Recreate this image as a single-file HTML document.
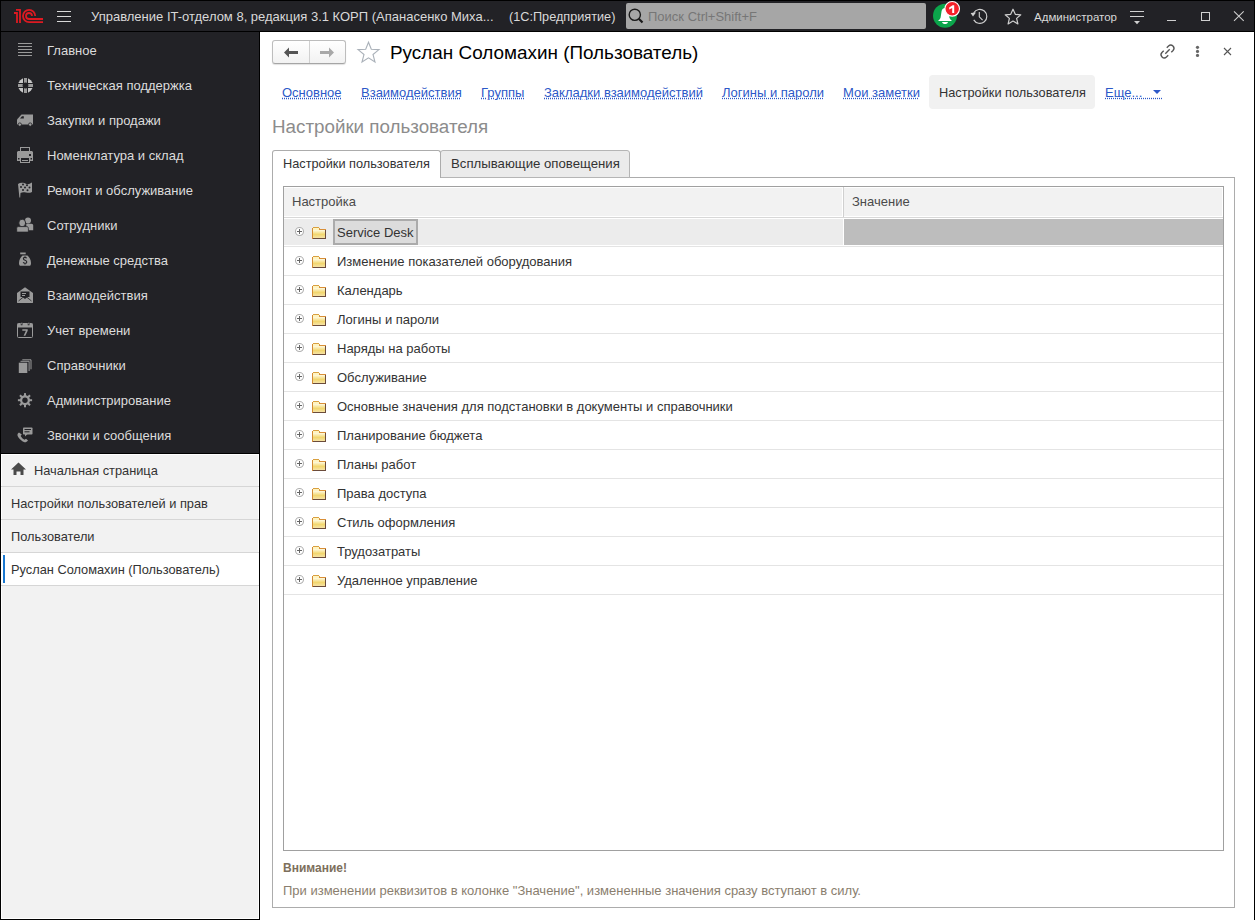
<!DOCTYPE html>
<html><head><meta charset="utf-8">
<style>
*{margin:0;padding:0;box-sizing:border-box}
html,body{width:1255px;height:920px;overflow:hidden;background:#fff;font-family:"Liberation Sans",sans-serif;font-size:13px}
.a{position:absolute}
.t{position:absolute;white-space:nowrap;line-height:16px}
svg{position:absolute;overflow:visible}
.lk{text-decoration:underline dotted;text-underline-offset:1px}
</style></head><body>
<!-- frame -->
<div class="a" style="left:0;top:0;width:1255px;height:32px;background:#000"></div>
<div class="a" style="left:1px;top:1px;width:1253px;height:30px;background:#222226"></div>
<div class="a" style="left:0;top:0;width:1px;height:920px;background:#000"></div>
<div class="a" style="left:1254px;top:0;width:1px;height:920px;background:#000"></div>
<div class="a" style="left:0;top:919px;width:260px;height:1px;background:#000"></div>
<div class="a" style="left:259px;top:32px;width:1px;height:888px;background:#000"></div>
<!-- sidebar dark -->
<div class="a" style="left:1px;top:32px;width:258px;height:421px;background:#222226"></div>
<div class="a" style="left:1px;top:453px;width:258px;height:1px;background:#000"></div>
<div class="a" style="left:1px;top:454px;width:258px;height:465px;background:#f2f2f2;border:1px solid #fff"></div>

<!-- title bar content -->
<svg style="left:0;top:0" width="50" height="32" viewBox="0 0 50 32">
  <g fill="none" stroke="#dd1a22" stroke-width="1.8">
    <path d="M14 13 H17 V23.1 M16 9.9 H20 V23.1"/>
    <path d="M35.2 16 A6.1 6.1 0 1 0 29.1 22.1 H43"/>
    <path d="M32 16 A3 3 0 1 0 29 19 H43"/>
  </g>
</svg>
<div class="a" style="left:57px;top:11px;width:14px;height:1px;background:#d8d8d8"></div>
<div class="a" style="left:57px;top:16px;width:14px;height:1px;background:#d8d8d8"></div>
<div class="a" style="left:57px;top:21px;width:14px;height:1px;background:#d8d8d8"></div>
<div class="t" style="left:91px;top:9px;color:#d9d9d9">Управление IT-отделом 8, редакция 3.1 КОРП (Апанасенко Миха...</div>
<div class="t" style="left:509px;top:9px;color:#d9d9d9;font-size:12.7px">(1С:Предприятие)</div>
<div class="a" style="left:626px;top:3px;width:300px;height:26px;background:#a6a6a6;border-radius:2px"></div>
<svg style="left:628px;top:8px" width="16" height="16" viewBox="0 0 16 16">
  <circle cx="6.8" cy="6.8" r="5.6" fill="none" stroke="#1a1a1a" stroke-width="1.4"/>
  <path d="M10.8 10.8 L14.5 14.5" stroke="#1a1a1a" stroke-width="2.2"/>
</svg>
<div class="t" style="left:648px;top:9px;color:#767676">Поиск Ctrl+Shift+F</div>

<svg style="left:930px;top:0" width="32" height="32" viewBox="0 0 32 32">
  <circle cx="15" cy="15.8" r="12" fill="#0ba54b"/>
  <path d="M8 20.9 C9 20 10.2 19 10.6 17.5 L11.6 11 C12 9 13.5 8 15 8 C16.5 8 18 9 18.4 11 L19.4 17.5 C19.8 19 21 20 22 20.9Z" fill="#fff"/>
  <path d="M12 22.1 H18 C17.5 23.5 16.5 24.1 15 24.1 C13.5 24.1 12.5 23.5 12 22.1Z" fill="#fff"/>
  <circle cx="22.2" cy="8.85" r="7.3" fill="#f5212a" stroke="#fff" stroke-width="1.1"/>
  <path d="M19.2 7.6 L22.6 5.2 H24.2 V13 H22.2 V8 L19.2 9.6Z" fill="#fff"/>
</svg>
<svg style="left:965px;top:4px" width="24" height="24" viewBox="0 0 24 24">
  <path d="M8.74 8.9 A7 7 0 1 1 8.74 15.9" fill="none" stroke="#d0d0d0" stroke-width="1.15"/>
  <path d="M5.6 9 L11 8.6 L8 12.6Z" fill="#d0d0d0"/>
  <path d="M14.3 8 V12.8 L17.6 16.2" fill="none" stroke="#d0d0d0" stroke-width="1.1"/>
</svg>
<svg style="left:1004px;top:7.6px" width="18" height="18" viewBox="0 0 18 18">
  <path d="M9 1.2 L11.3 6.3 L16.8 6.8 L12.6 10.4 L13.9 15.9 L9 13 L4.1 15.9 L5.4 10.4 L1.2 6.8 L6.7 6.3Z" fill="none" stroke="#cfcfcf" stroke-width="1.2" stroke-linejoin="round"/>
</svg>
<div class="t" style="left:1034px;top:9px;color:#d9d9d9;font-size:11.5px">Администратор</div>
<div class="a" style="left:1130px;top:11px;width:14px;height:1px;background:#d0d0d0"></div>
<div class="a" style="left:1130px;top:16px;width:14px;height:1px;background:#d0d0d0"></div>
<svg style="left:1134px;top:21px" width="6" height="4" viewBox="0 0 6 4"><path d="M0 0 H6 L3 3.3Z" fill="#d0d0d0"/></svg>
<div class="a" style="left:1167px;top:20px;width:9px;height:1px;background:#cfcfcf"></div>
<div class="a" style="left:1201px;top:12px;width:9px;height:9px;border:1px solid #d0d0d0"></div>
<svg style="left:1233px;top:11px" width="12" height="11" viewBox="0 0 12 11"><path d="M1 0.3 L10.7 9.8 M10.7 0.3 L1 9.8" stroke="#d0d0d0" stroke-width="1.05"/></svg>

<!-- sidebar items -->
<svg style="left:17px;top:42px" width="17" height="17" viewBox="0 0 17 17"><g fill="#9a9a9a"><rect x="1" y="1" width="14" height="1"/><rect x="1" y="4" width="14" height="1"/><rect x="1" y="7" width="14" height="1"/><rect x="1" y="10" width="14" height="1"/><rect x="1" y="13" width="14" height="1"/></g></svg>
<div class="t" style="left:47px;top:43px;color:#dcdcdc">Главное</div>
<svg style="left:17px;top:77px" width="17" height="17" viewBox="0 0 17 17"><circle cx="8.5" cy="8.5" r="7.5" fill="#c8c8c8"/><g fill="#9a9a9a"><rect x="7" y="1" width="3" height="5"/><rect x="7" y="11" width="3" height="5"/><rect x="1" y="7" width="5" height="3"/><rect x="11" y="7" width="5" height="3"/></g><g fill="#222226"><rect x="6" y="0" width="1" height="17"/><rect x="10" y="0" width="1" height="17"/><rect x="0" y="6" width="17" height="1"/><rect x="0" y="10" width="17" height="1"/><circle cx="8.5" cy="8.5" r="2.9"/></g></svg>
<div class="t" style="left:47px;top:78px;color:#dcdcdc">Техническая поддержка</div>
<svg style="left:17px;top:112px" width="17" height="17" viewBox="0 0 17 17"><path d="M0 7.5 L4.5 2.5 H16 V12.5 H0Z" fill="#9a9a9a"/><path d="M3 6.5 L5 4.3 H6.8 V6.5Z" fill="#222226"/><circle cx="2.8" cy="12.6" r="1.7" fill="#9a9a9a" stroke="#222226" stroke-width="0.8"/><circle cx="13.2" cy="12.6" r="1.7" fill="#9a9a9a" stroke="#222226" stroke-width="0.8"/></svg>
<div class="t" style="left:47px;top:113px;color:#dcdcdc">Закупки и продажи</div>
<svg style="left:17px;top:147px" width="17" height="17" viewBox="0 0 17 17"><rect x="3.5" y="0.5" width="9" height="5" fill="none" stroke="#9a9a9a"/><path d="M1 4 H15 L16 5 V14 H0 V5Z" fill="#9a9a9a"/><rect x="3.5" y="10.5" width="9" height="5" fill="#222226" stroke="#9a9a9a"/><rect x="5" y="13" width="6" height="1" fill="#9a9a9a"/><rect x="12" y="7" width="2" height="2" fill="#222226"/><rect x="1" y="11" width="1.5" height="1.5" fill="#222226"/><rect x="13.5" y="11" width="1.5" height="1.5" fill="#222226"/></svg>
<div class="t" style="left:47px;top:148px;color:#dcdcdc">Номенклатура и склад</div>
<svg style="left:17px;top:182px" width="17" height="17" viewBox="0 0 17 17"><path d="M1 2 C4 0 7 1 9.5 2 C11.5 2.7 13 1.5 15 0.5 V10 C13 11 11 11 9 10.5 C7 10 5 10 3.5 11 L3.2 15.5 L2.4 15.5 Z" fill="#9a9a9a"/><g fill="#222226"><circle cx="6" cy="2.5" r="1"/><circle cx="10" cy="3.3" r="1"/><circle cx="4" cy="5" r="1"/><circle cx="8" cy="5.6" r="1"/><circle cx="12.5" cy="5.5" r="1"/><circle cx="6" cy="8" r="1"/><circle cx="10.5" cy="8.3" r="1"/></g></svg>
<div class="t" style="left:47px;top:183px;color:#dcdcdc">Ремонт и обслуживание</div>
<svg style="left:17px;top:217px" width="17" height="17" viewBox="0 0 17 17"><circle cx="11" cy="3.4" r="3" fill="#9a9a9a"/><path d="M9.3 6.7 H14.5 C15.5 6.7 16.2 7.5 16.2 8.5 V13.2 H9.3Z" fill="#9a9a9a"/><ellipse cx="5.2" cy="6" rx="3.4" ry="3.8" fill="#9a9a9a" stroke="#222226" stroke-width="0.9"/><path d="M1.3 9.6 H9.8 C10.8 9.6 11.4 10.4 11.4 11.4 V15.1 H-0.3 V11.4 C-0.3 10.4 0.3 9.6 1.3 9.6Z" fill="#9a9a9a" stroke="#222226" stroke-width="0.8"/></svg>
<div class="t" style="left:47px;top:218px;color:#dcdcdc">Сотрудники</div>
<svg style="left:17px;top:252px" width="17" height="17" viewBox="0 0 17 17"><rect x="3.2" y="0.5" width="5.5" height="1.8" fill="#9a9a9a"/><path d="M3.5 3.5 H8.5 C10.5 5 12 8 12 11 C12 13 11.5 13.8 10 13.8 H2 C0.5 13.8 0 13 0 11 C0 8 1.5 5 3.5 3.5Z" fill="#9a9a9a" transform="translate(2,0)"/><path d="M9.6 6.3 C9.2 5.6 8.6 5.4 8 5.4 C7 5.4 6.4 5.9 6.4 6.7 C6.4 8.6 9.8 7.8 9.8 9.9 C9.8 10.8 9.1 11.3 8 11.3 C7.2 11.3 6.6 11 6.2 10.3 M8 4.3 V5.4 M8 11.3 V12.4" fill="none" stroke="#222226" stroke-width="1.1"/></svg>
<div class="t" style="left:47px;top:253px;color:#dcdcdc">Денежные средства</div>
<svg style="left:17px;top:287px" width="17" height="17" viewBox="0 0 17 17"><path d="M0 6 L8 0.3 L16 6 V15.5 C16 15.8 15.8 16 15.5 16 H0.5 C0.2 16 0 15.8 0 15.5Z" fill="#9a9a9a"/><rect x="3.5" y="4.5" width="9" height="5.5" fill="#222226"/><rect x="5" y="6" width="4" height="1" fill="#9a9a9a"/><rect x="5" y="8" width="3" height="1" fill="#9a9a9a"/><path d="M1.5 14 L7 9.5 M14.5 14 L9 9.5" stroke="#222226" stroke-width="0.8"/><path d="M5.5 10 L8 12 L10.5 10Z" fill="#222226"/></svg>
<div class="t" style="left:47px;top:288px;color:#dcdcdc">Взаимодействия</div>
<svg style="left:17px;top:322px" width="17" height="17" viewBox="0 0 17 17"><rect x="0.5" y="1.5" width="15" height="14" rx="1" fill="none" stroke="#9a9a9a"/><rect x="0.5" y="1.5" width="15" height="4" fill="#9a9a9a"/><rect x="4" y="0" width="1.2" height="3" fill="#9a9a9a" stroke="#222226" stroke-width="0.5"/><rect x="11" y="0" width="1.2" height="3" fill="#9a9a9a" stroke="#222226" stroke-width="0.5"/><path d="M5.3 7.3 H10.7 V8.7 L8.3 13.8 H6.6 L8.9 8.8 H5.3Z" fill="#9a9a9a"/></svg>
<div class="t" style="left:47px;top:323px;color:#dcdcdc">Учет времени</div>
<svg style="left:17px;top:358px" width="17" height="17" viewBox="0 0 17 17"><path d="M5.3 1.8 H14 V11.3" fill="none" stroke="#9a9a9a" stroke-width="1"/><path d="M3.5 3.3 H12.1 V13" fill="none" stroke="#9a9a9a" stroke-width="1"/><rect x="1.8" y="4.7" width="8.5" height="10.3" fill="#9a9a9a"/></svg>
<div class="t" style="left:47px;top:358px;color:#dcdcdc">Справочники</div>
<svg style="left:18px;top:393px" width="17" height="17" viewBox="0 0 17 17"><g transform="translate(7,7.2)" fill="#9a9a9a"><circle r="5"/><rect x="-1" y="-7.1" width="2" height="14.2"/><rect x="-7.1" y="-1" width="14.2" height="2"/><rect x="-1" y="-7.1" width="2" height="14.2" transform="rotate(45)"/><rect x="-1" y="-7.1" width="2" height="14.2" transform="rotate(-45)"/><circle r="2.7" fill="#222226"/></g></svg>
<div class="t" style="left:47px;top:393px;color:#dcdcdc">Администрирование</div>
<svg style="left:17px;top:427px" width="17" height="17" viewBox="0 0 17 17"><rect x="6" y="0.5" width="9.5" height="7" rx="0.8" fill="#9a9a9a"/><path d="M8 7 L8 9.5 L10.5 7Z" fill="#9a9a9a"/><rect x="7.5" y="2" width="6.5" height="1" fill="#222226"/><rect x="7.5" y="4.3" width="5" height="1" fill="#222226"/><path d="M2 5.5 C0 6.5 0 8.5 1.5 10.5 C3 12.5 5 14.5 7.5 15.3 C9 15.5 10 14.5 11 13.5 L9 11.8 L7.5 12.8 C6 12 4.5 10.5 3.6 9 L4.8 7.5Z" fill="#9a9a9a"/></svg>
<div class="t" style="left:47px;top:428px;color:#dcdcdc">Звонки и сообщения</div>
<div class="a" style="left:1px;top:486px;width:258px;height:1px;background:#d6d6d6"></div>
<div class="a" style="left:1px;top:519px;width:258px;height:1px;background:#d6d6d6"></div>
<div class="a" style="left:1px;top:552px;width:258px;height:1px;background:#d6d6d6"></div>
<div class="a" style="left:1px;top:585px;width:258px;height:1px;background:#d6d6d6"></div>
<div class="a" style="left:2px;top:553px;width:256px;height:32px;background:#fff"></div>
<div class="a" style="left:3px;top:555px;width:2px;height:28px;background:#1a78d0"></div>
<svg style="left:11px;top:462px" width="16" height="14" viewBox="0 0 16 14"><path d="M7.5 0.5 L15 7.5 H12.5 V13 H9.5 V9.5 H5.5 V13 H2.5 V7.5 H0Z" fill="#4a4a4a"/></svg>
<div class="t" style="left:34px;top:463px;color:#333;font-size:12.8px">Начальная страница</div>
<div class="t" style="left:11px;top:496px;color:#333;font-size:12.8px">Настройки пользователей и прав</div>
<div class="t" style="left:11px;top:529px;color:#333;font-size:12.8px">Пользователи</div>
<div class="t" style="left:11px;top:562px;color:#333;font-size:12.8px">Руслан Соломахин (Пользователь)</div>
<!-- content -->
<svg width="0" height="0" style="position:absolute"><defs><linearGradient id="fg" x1="0" y1="0" x2="0" y2="1"><stop offset="0" stop-color="#fffae0"/><stop offset="0.55" stop-color="#f2d66e"/><stop offset="1" stop-color="#f6e3a6"/></linearGradient><linearGradient id="fs" x1="0" y1="0" x2="0" y2="1"><stop offset="0" stop-color="#d99a3a"/><stop offset="1" stop-color="#7a5530"/></linearGradient></defs></svg>
<div class="a" style="left:272px;top:40px;width:74px;height:24px;border:1px solid #bdbdbd;border-bottom-color:#a5a5a5;border-radius:3px;background:linear-gradient(#fff,#f2f2f2);box-shadow:0 1px 1px rgba(0,0,0,0.12)"></div>
<div class="a" style="left:309px;top:41px;width:1px;height:22px;background:#d0d0d0"></div>
<svg style="left:284px;top:47px" width="15" height="11" viewBox="0 0 15 11"><path d="M0 5.5 L5 0.5 V4 H14 V7 H5 V10.5Z" fill="#555"/></svg>
<svg style="left:320px;top:47px" width="15" height="11" viewBox="0 0 15 11"><path d="M14 5.5 L9 0.5 V4 H0 V7 H9 V10.5Z" fill="#a8a8a8"/></svg>
<svg style="left:356px;top:40px" width="25" height="24" viewBox="0 0 25 24"><path d="M12.5 2.3 L15.3 9.2 L23 9.6 L17 14.5 L19 22 L12.5 17.8 L6 22 L8 14.5 L2 9.6 L9.7 9.2Z" fill="none" stroke="#aab1b9" stroke-width="1.1" stroke-linejoin="miter"/></svg>
<div class="t" style="left:390px;top:42px;font-size:18.9px;line-height:22px;color:#000">Руслан Соломахин (Пользователь)</div>
<svg style="left:1160px;top:44px" width="15" height="15" viewBox="0 0 15 15"><g fill="none" stroke="#555" stroke-width="1.35"><path d="M6.77 3.71 L8.54 1.94 A3.2 3.2 0 0 1 13.06 6.46 L11.29 8.23"/><path d="M3.71 6.77 L1.94 8.54 A3.2 3.2 0 0 0 6.46 13.06 L8.23 11.29"/><path d="M5.3 9.7 L9.7 5.3"/></g></svg>
<svg style="left:1195px;top:45px" width="5" height="13" viewBox="0 0 5 13"><g fill="#666"><circle cx="2.5" cy="2.3" r="1.6"/><circle cx="2.5" cy="6.4" r="1.6"/><circle cx="2.5" cy="10.4" r="1.6"/></g></svg>
<svg style="left:1223px;top:47px" width="9" height="9" viewBox="0 0 9 9"><path d="M1 1 L8 8 M8 1 L1 8" stroke="#555" stroke-width="1.1"/></svg>
<div class="a" style="left:929px;top:75px;width:166px;height:34px;background:#f1f1f1;border-radius:4px"></div>
<div class="t lk" style="left:282px;top:85px;color:#2c58c8">Основное</div>
<div class="t lk" style="left:361px;top:85px;color:#2c58c8">Взаимодействия</div>
<div class="t lk" style="left:481px;top:85px;color:#2c58c8">Группы</div>
<div class="t lk" style="left:544px;top:85px;color:#2c58c8">Закладки взаимодействий</div>
<div class="t lk" style="left:722px;top:85px;color:#2c58c8">Логины и пароли</div>
<div class="t lk" style="left:843px;top:85px;color:#2c58c8">Мои заметки</div>
<div class="t" style="left:939px;top:85px;color:#333;font-size:12.75px">Настройки пользователя</div>
<div class="t lk" style="left:1105px;top:85px;color:#2c58c8;width:59px">Еще...&nbsp;&nbsp;&nbsp;&nbsp;&nbsp;&nbsp;</div>
<svg style="left:1153px;top:90px" width="8" height="4" viewBox="0 0 8 4"><path d="M0 0 H8 L4 4Z" fill="#2c58c8"/></svg>
<div class="t" style="left:272px;top:116px;font-size:18.8px;line-height:22px;color:#8c8c8c">Настройки пользователя</div>
<div class="a" style="left:272px;top:177px;width:963px;height:731px;border:1px solid #acacac;border-top:0"></div>
<div class="a" style="left:629px;top:177px;width:606px;height:1px;background:#acacac"></div>
<div class="a" style="left:440px;top:150px;width:190px;height:28px;border:1px solid #b5b5b5;border-radius:3px 3px 0 0;background:#ebebeb"></div>
<div class="a" style="left:272px;top:150px;width:169px;height:28px;border:1px solid #acacac;border-bottom:0;border-radius:3px 3px 0 0;background:#fff"></div>
<div class="t" style="left:283px;top:156px;color:#333;font-size:12.75px">Настройки пользователя</div>
<div class="t" style="left:451px;top:156px;color:#333;font-size:13.2px">Всплывающие оповещения</div>
<div class="a" style="left:283px;top:186px;width:941px;height:665px;border:1px solid #a0a0a0;background:#fff"></div>
<div class="a" style="left:284px;top:187px;width:939px;height:30px;background:#f2f2f2;border:1px solid #fff;border-left:0"></div>
<div class="a" style="left:284px;top:217px;width:939px;height:1px;background:#d8d8d8"></div>
<div class="a" style="left:843px;top:187px;width:1px;height:30px;background:#d0d0d0"></div>
<div class="a" style="left:842px;top:187px;width:1px;height:30px;background:#fff"></div>
<div class="t" style="left:292px;top:194px;color:#4a4a4a">Настройка</div>
<div class="t" style="left:852px;top:194px;color:#4a4a4a">Значение</div>
<div class="a" style="left:284px;top:219px;width:559px;height:26px;background:#ececec"></div>
<div class="a" style="left:844px;top:219px;width:379px;height:26px;background:#bdbdbd"></div>
<div class="a" style="left:333px;top:219px;width:85px;height:26px;background:#dcdcdc;border:2px solid #ababab"></div>
<div class="a" style="left:284px;top:246px;width:939px;height:1px;background:#e4e4e4"></div>
<svg style="left:294px;top:226px" width="12" height="12" viewBox="0 0 12 12"><circle cx="5.5" cy="5.5" r="4" fill="#fff" stroke="#b0b0b0" stroke-width="1.1"/><path d="M5.5 3 V8 M3 5.5 H8" stroke="#666" stroke-width="1"/></svg>
<svg style="left:312px;top:227px" width="14" height="12" viewBox="0 0 14 12" shape-rendering="crispEdges"><rect x="1" y="1" width="6" height="2" fill="#fff4c0"/><rect x="1" y="3" width="12" height="8" fill="url(#fg)"/><rect x="0" y="1" width="1" height="11" fill="#d38b32"/><rect x="1" y="0" width="6" height="1" fill="#d9a040"/><rect x="7" y="1" width="1" height="1" fill="#d9a040"/><rect x="7" y="2" width="7" height="1" fill="#d98f38"/><rect x="13" y="3" width="1" height="9" fill="#6b4b3b"/><rect x="1" y="11" width="13" height="1" fill="#6b4b3b"/></svg>
<div class="t" style="left:337px;top:225px;color:#333">Service Desk</div>
<div class="a" style="left:284px;top:275px;width:939px;height:1px;background:#e4e4e4"></div>
<svg style="left:294px;top:255px" width="12" height="12" viewBox="0 0 12 12"><circle cx="5.5" cy="5.5" r="4" fill="#fff" stroke="#b0b0b0" stroke-width="1.1"/><path d="M5.5 3 V8 M3 5.5 H8" stroke="#666" stroke-width="1"/></svg>
<svg style="left:312px;top:256px" width="14" height="12" viewBox="0 0 14 12" shape-rendering="crispEdges"><rect x="1" y="1" width="6" height="2" fill="#fff4c0"/><rect x="1" y="3" width="12" height="8" fill="url(#fg)"/><rect x="0" y="1" width="1" height="11" fill="#d38b32"/><rect x="1" y="0" width="6" height="1" fill="#d9a040"/><rect x="7" y="1" width="1" height="1" fill="#d9a040"/><rect x="7" y="2" width="7" height="1" fill="#d98f38"/><rect x="13" y="3" width="1" height="9" fill="#6b4b3b"/><rect x="1" y="11" width="13" height="1" fill="#6b4b3b"/></svg>
<div class="t" style="left:337px;top:254px;color:#333">Изменение показателей оборудования</div>
<div class="a" style="left:284px;top:304px;width:939px;height:1px;background:#e4e4e4"></div>
<svg style="left:294px;top:284px" width="12" height="12" viewBox="0 0 12 12"><circle cx="5.5" cy="5.5" r="4" fill="#fff" stroke="#b0b0b0" stroke-width="1.1"/><path d="M5.5 3 V8 M3 5.5 H8" stroke="#666" stroke-width="1"/></svg>
<svg style="left:312px;top:285px" width="14" height="12" viewBox="0 0 14 12" shape-rendering="crispEdges"><rect x="1" y="1" width="6" height="2" fill="#fff4c0"/><rect x="1" y="3" width="12" height="8" fill="url(#fg)"/><rect x="0" y="1" width="1" height="11" fill="#d38b32"/><rect x="1" y="0" width="6" height="1" fill="#d9a040"/><rect x="7" y="1" width="1" height="1" fill="#d9a040"/><rect x="7" y="2" width="7" height="1" fill="#d98f38"/><rect x="13" y="3" width="1" height="9" fill="#6b4b3b"/><rect x="1" y="11" width="13" height="1" fill="#6b4b3b"/></svg>
<div class="t" style="left:337px;top:283px;color:#333">Календарь</div>
<div class="a" style="left:284px;top:333px;width:939px;height:1px;background:#e4e4e4"></div>
<svg style="left:294px;top:313px" width="12" height="12" viewBox="0 0 12 12"><circle cx="5.5" cy="5.5" r="4" fill="#fff" stroke="#b0b0b0" stroke-width="1.1"/><path d="M5.5 3 V8 M3 5.5 H8" stroke="#666" stroke-width="1"/></svg>
<svg style="left:312px;top:314px" width="14" height="12" viewBox="0 0 14 12" shape-rendering="crispEdges"><rect x="1" y="1" width="6" height="2" fill="#fff4c0"/><rect x="1" y="3" width="12" height="8" fill="url(#fg)"/><rect x="0" y="1" width="1" height="11" fill="#d38b32"/><rect x="1" y="0" width="6" height="1" fill="#d9a040"/><rect x="7" y="1" width="1" height="1" fill="#d9a040"/><rect x="7" y="2" width="7" height="1" fill="#d98f38"/><rect x="13" y="3" width="1" height="9" fill="#6b4b3b"/><rect x="1" y="11" width="13" height="1" fill="#6b4b3b"/></svg>
<div class="t" style="left:337px;top:312px;color:#333">Логины и пароли</div>
<div class="a" style="left:284px;top:362px;width:939px;height:1px;background:#e4e4e4"></div>
<svg style="left:294px;top:342px" width="12" height="12" viewBox="0 0 12 12"><circle cx="5.5" cy="5.5" r="4" fill="#fff" stroke="#b0b0b0" stroke-width="1.1"/><path d="M5.5 3 V8 M3 5.5 H8" stroke="#666" stroke-width="1"/></svg>
<svg style="left:312px;top:343px" width="14" height="12" viewBox="0 0 14 12" shape-rendering="crispEdges"><rect x="1" y="1" width="6" height="2" fill="#fff4c0"/><rect x="1" y="3" width="12" height="8" fill="url(#fg)"/><rect x="0" y="1" width="1" height="11" fill="#d38b32"/><rect x="1" y="0" width="6" height="1" fill="#d9a040"/><rect x="7" y="1" width="1" height="1" fill="#d9a040"/><rect x="7" y="2" width="7" height="1" fill="#d98f38"/><rect x="13" y="3" width="1" height="9" fill="#6b4b3b"/><rect x="1" y="11" width="13" height="1" fill="#6b4b3b"/></svg>
<div class="t" style="left:337px;top:341px;color:#333">Наряды на работы</div>
<div class="a" style="left:284px;top:391px;width:939px;height:1px;background:#e4e4e4"></div>
<svg style="left:294px;top:371px" width="12" height="12" viewBox="0 0 12 12"><circle cx="5.5" cy="5.5" r="4" fill="#fff" stroke="#b0b0b0" stroke-width="1.1"/><path d="M5.5 3 V8 M3 5.5 H8" stroke="#666" stroke-width="1"/></svg>
<svg style="left:312px;top:372px" width="14" height="12" viewBox="0 0 14 12" shape-rendering="crispEdges"><rect x="1" y="1" width="6" height="2" fill="#fff4c0"/><rect x="1" y="3" width="12" height="8" fill="url(#fg)"/><rect x="0" y="1" width="1" height="11" fill="#d38b32"/><rect x="1" y="0" width="6" height="1" fill="#d9a040"/><rect x="7" y="1" width="1" height="1" fill="#d9a040"/><rect x="7" y="2" width="7" height="1" fill="#d98f38"/><rect x="13" y="3" width="1" height="9" fill="#6b4b3b"/><rect x="1" y="11" width="13" height="1" fill="#6b4b3b"/></svg>
<div class="t" style="left:337px;top:370px;color:#333">Обслуживание</div>
<div class="a" style="left:284px;top:420px;width:939px;height:1px;background:#e4e4e4"></div>
<svg style="left:294px;top:400px" width="12" height="12" viewBox="0 0 12 12"><circle cx="5.5" cy="5.5" r="4" fill="#fff" stroke="#b0b0b0" stroke-width="1.1"/><path d="M5.5 3 V8 M3 5.5 H8" stroke="#666" stroke-width="1"/></svg>
<svg style="left:312px;top:401px" width="14" height="12" viewBox="0 0 14 12" shape-rendering="crispEdges"><rect x="1" y="1" width="6" height="2" fill="#fff4c0"/><rect x="1" y="3" width="12" height="8" fill="url(#fg)"/><rect x="0" y="1" width="1" height="11" fill="#d38b32"/><rect x="1" y="0" width="6" height="1" fill="#d9a040"/><rect x="7" y="1" width="1" height="1" fill="#d9a040"/><rect x="7" y="2" width="7" height="1" fill="#d98f38"/><rect x="13" y="3" width="1" height="9" fill="#6b4b3b"/><rect x="1" y="11" width="13" height="1" fill="#6b4b3b"/></svg>
<div class="t" style="left:337px;top:399px;color:#333">Основные значения для подстановки в документы и справочники</div>
<div class="a" style="left:284px;top:449px;width:939px;height:1px;background:#e4e4e4"></div>
<svg style="left:294px;top:429px" width="12" height="12" viewBox="0 0 12 12"><circle cx="5.5" cy="5.5" r="4" fill="#fff" stroke="#b0b0b0" stroke-width="1.1"/><path d="M5.5 3 V8 M3 5.5 H8" stroke="#666" stroke-width="1"/></svg>
<svg style="left:312px;top:430px" width="14" height="12" viewBox="0 0 14 12" shape-rendering="crispEdges"><rect x="1" y="1" width="6" height="2" fill="#fff4c0"/><rect x="1" y="3" width="12" height="8" fill="url(#fg)"/><rect x="0" y="1" width="1" height="11" fill="#d38b32"/><rect x="1" y="0" width="6" height="1" fill="#d9a040"/><rect x="7" y="1" width="1" height="1" fill="#d9a040"/><rect x="7" y="2" width="7" height="1" fill="#d98f38"/><rect x="13" y="3" width="1" height="9" fill="#6b4b3b"/><rect x="1" y="11" width="13" height="1" fill="#6b4b3b"/></svg>
<div class="t" style="left:337px;top:428px;color:#333">Планирование бюджета</div>
<div class="a" style="left:284px;top:478px;width:939px;height:1px;background:#e4e4e4"></div>
<svg style="left:294px;top:458px" width="12" height="12" viewBox="0 0 12 12"><circle cx="5.5" cy="5.5" r="4" fill="#fff" stroke="#b0b0b0" stroke-width="1.1"/><path d="M5.5 3 V8 M3 5.5 H8" stroke="#666" stroke-width="1"/></svg>
<svg style="left:312px;top:459px" width="14" height="12" viewBox="0 0 14 12" shape-rendering="crispEdges"><rect x="1" y="1" width="6" height="2" fill="#fff4c0"/><rect x="1" y="3" width="12" height="8" fill="url(#fg)"/><rect x="0" y="1" width="1" height="11" fill="#d38b32"/><rect x="1" y="0" width="6" height="1" fill="#d9a040"/><rect x="7" y="1" width="1" height="1" fill="#d9a040"/><rect x="7" y="2" width="7" height="1" fill="#d98f38"/><rect x="13" y="3" width="1" height="9" fill="#6b4b3b"/><rect x="1" y="11" width="13" height="1" fill="#6b4b3b"/></svg>
<div class="t" style="left:337px;top:457px;color:#333">Планы работ</div>
<div class="a" style="left:284px;top:507px;width:939px;height:1px;background:#e4e4e4"></div>
<svg style="left:294px;top:487px" width="12" height="12" viewBox="0 0 12 12"><circle cx="5.5" cy="5.5" r="4" fill="#fff" stroke="#b0b0b0" stroke-width="1.1"/><path d="M5.5 3 V8 M3 5.5 H8" stroke="#666" stroke-width="1"/></svg>
<svg style="left:312px;top:488px" width="14" height="12" viewBox="0 0 14 12" shape-rendering="crispEdges"><rect x="1" y="1" width="6" height="2" fill="#fff4c0"/><rect x="1" y="3" width="12" height="8" fill="url(#fg)"/><rect x="0" y="1" width="1" height="11" fill="#d38b32"/><rect x="1" y="0" width="6" height="1" fill="#d9a040"/><rect x="7" y="1" width="1" height="1" fill="#d9a040"/><rect x="7" y="2" width="7" height="1" fill="#d98f38"/><rect x="13" y="3" width="1" height="9" fill="#6b4b3b"/><rect x="1" y="11" width="13" height="1" fill="#6b4b3b"/></svg>
<div class="t" style="left:337px;top:486px;color:#333">Права доступа</div>
<div class="a" style="left:284px;top:536px;width:939px;height:1px;background:#e4e4e4"></div>
<svg style="left:294px;top:516px" width="12" height="12" viewBox="0 0 12 12"><circle cx="5.5" cy="5.5" r="4" fill="#fff" stroke="#b0b0b0" stroke-width="1.1"/><path d="M5.5 3 V8 M3 5.5 H8" stroke="#666" stroke-width="1"/></svg>
<svg style="left:312px;top:517px" width="14" height="12" viewBox="0 0 14 12" shape-rendering="crispEdges"><rect x="1" y="1" width="6" height="2" fill="#fff4c0"/><rect x="1" y="3" width="12" height="8" fill="url(#fg)"/><rect x="0" y="1" width="1" height="11" fill="#d38b32"/><rect x="1" y="0" width="6" height="1" fill="#d9a040"/><rect x="7" y="1" width="1" height="1" fill="#d9a040"/><rect x="7" y="2" width="7" height="1" fill="#d98f38"/><rect x="13" y="3" width="1" height="9" fill="#6b4b3b"/><rect x="1" y="11" width="13" height="1" fill="#6b4b3b"/></svg>
<div class="t" style="left:337px;top:515px;color:#333">Стиль оформления</div>
<div class="a" style="left:284px;top:565px;width:939px;height:1px;background:#e4e4e4"></div>
<svg style="left:294px;top:545px" width="12" height="12" viewBox="0 0 12 12"><circle cx="5.5" cy="5.5" r="4" fill="#fff" stroke="#b0b0b0" stroke-width="1.1"/><path d="M5.5 3 V8 M3 5.5 H8" stroke="#666" stroke-width="1"/></svg>
<svg style="left:312px;top:546px" width="14" height="12" viewBox="0 0 14 12" shape-rendering="crispEdges"><rect x="1" y="1" width="6" height="2" fill="#fff4c0"/><rect x="1" y="3" width="12" height="8" fill="url(#fg)"/><rect x="0" y="1" width="1" height="11" fill="#d38b32"/><rect x="1" y="0" width="6" height="1" fill="#d9a040"/><rect x="7" y="1" width="1" height="1" fill="#d9a040"/><rect x="7" y="2" width="7" height="1" fill="#d98f38"/><rect x="13" y="3" width="1" height="9" fill="#6b4b3b"/><rect x="1" y="11" width="13" height="1" fill="#6b4b3b"/></svg>
<div class="t" style="left:337px;top:544px;color:#333">Трудозатраты</div>
<div class="a" style="left:284px;top:594px;width:939px;height:1px;background:#e4e4e4"></div>
<svg style="left:294px;top:574px" width="12" height="12" viewBox="0 0 12 12"><circle cx="5.5" cy="5.5" r="4" fill="#fff" stroke="#b0b0b0" stroke-width="1.1"/><path d="M5.5 3 V8 M3 5.5 H8" stroke="#666" stroke-width="1"/></svg>
<svg style="left:312px;top:575px" width="14" height="12" viewBox="0 0 14 12" shape-rendering="crispEdges"><rect x="1" y="1" width="6" height="2" fill="#fff4c0"/><rect x="1" y="3" width="12" height="8" fill="url(#fg)"/><rect x="0" y="1" width="1" height="11" fill="#d38b32"/><rect x="1" y="0" width="6" height="1" fill="#d9a040"/><rect x="7" y="1" width="1" height="1" fill="#d9a040"/><rect x="7" y="2" width="7" height="1" fill="#d98f38"/><rect x="13" y="3" width="1" height="9" fill="#6b4b3b"/><rect x="1" y="11" width="13" height="1" fill="#6b4b3b"/></svg>
<div class="t" style="left:337px;top:573px;color:#333">Удаленное управление</div>
<div class="t" style="left:283px;top:860px;font-size:12px;font-weight:bold;color:#7d6f5c">Внимание!</div>
<div class="t" style="left:283px;top:883px;color:#8a7e6e">При изменении реквизитов в колонке "Значение", измененные значения сразу вступают в силу.</div>
</body></html>
